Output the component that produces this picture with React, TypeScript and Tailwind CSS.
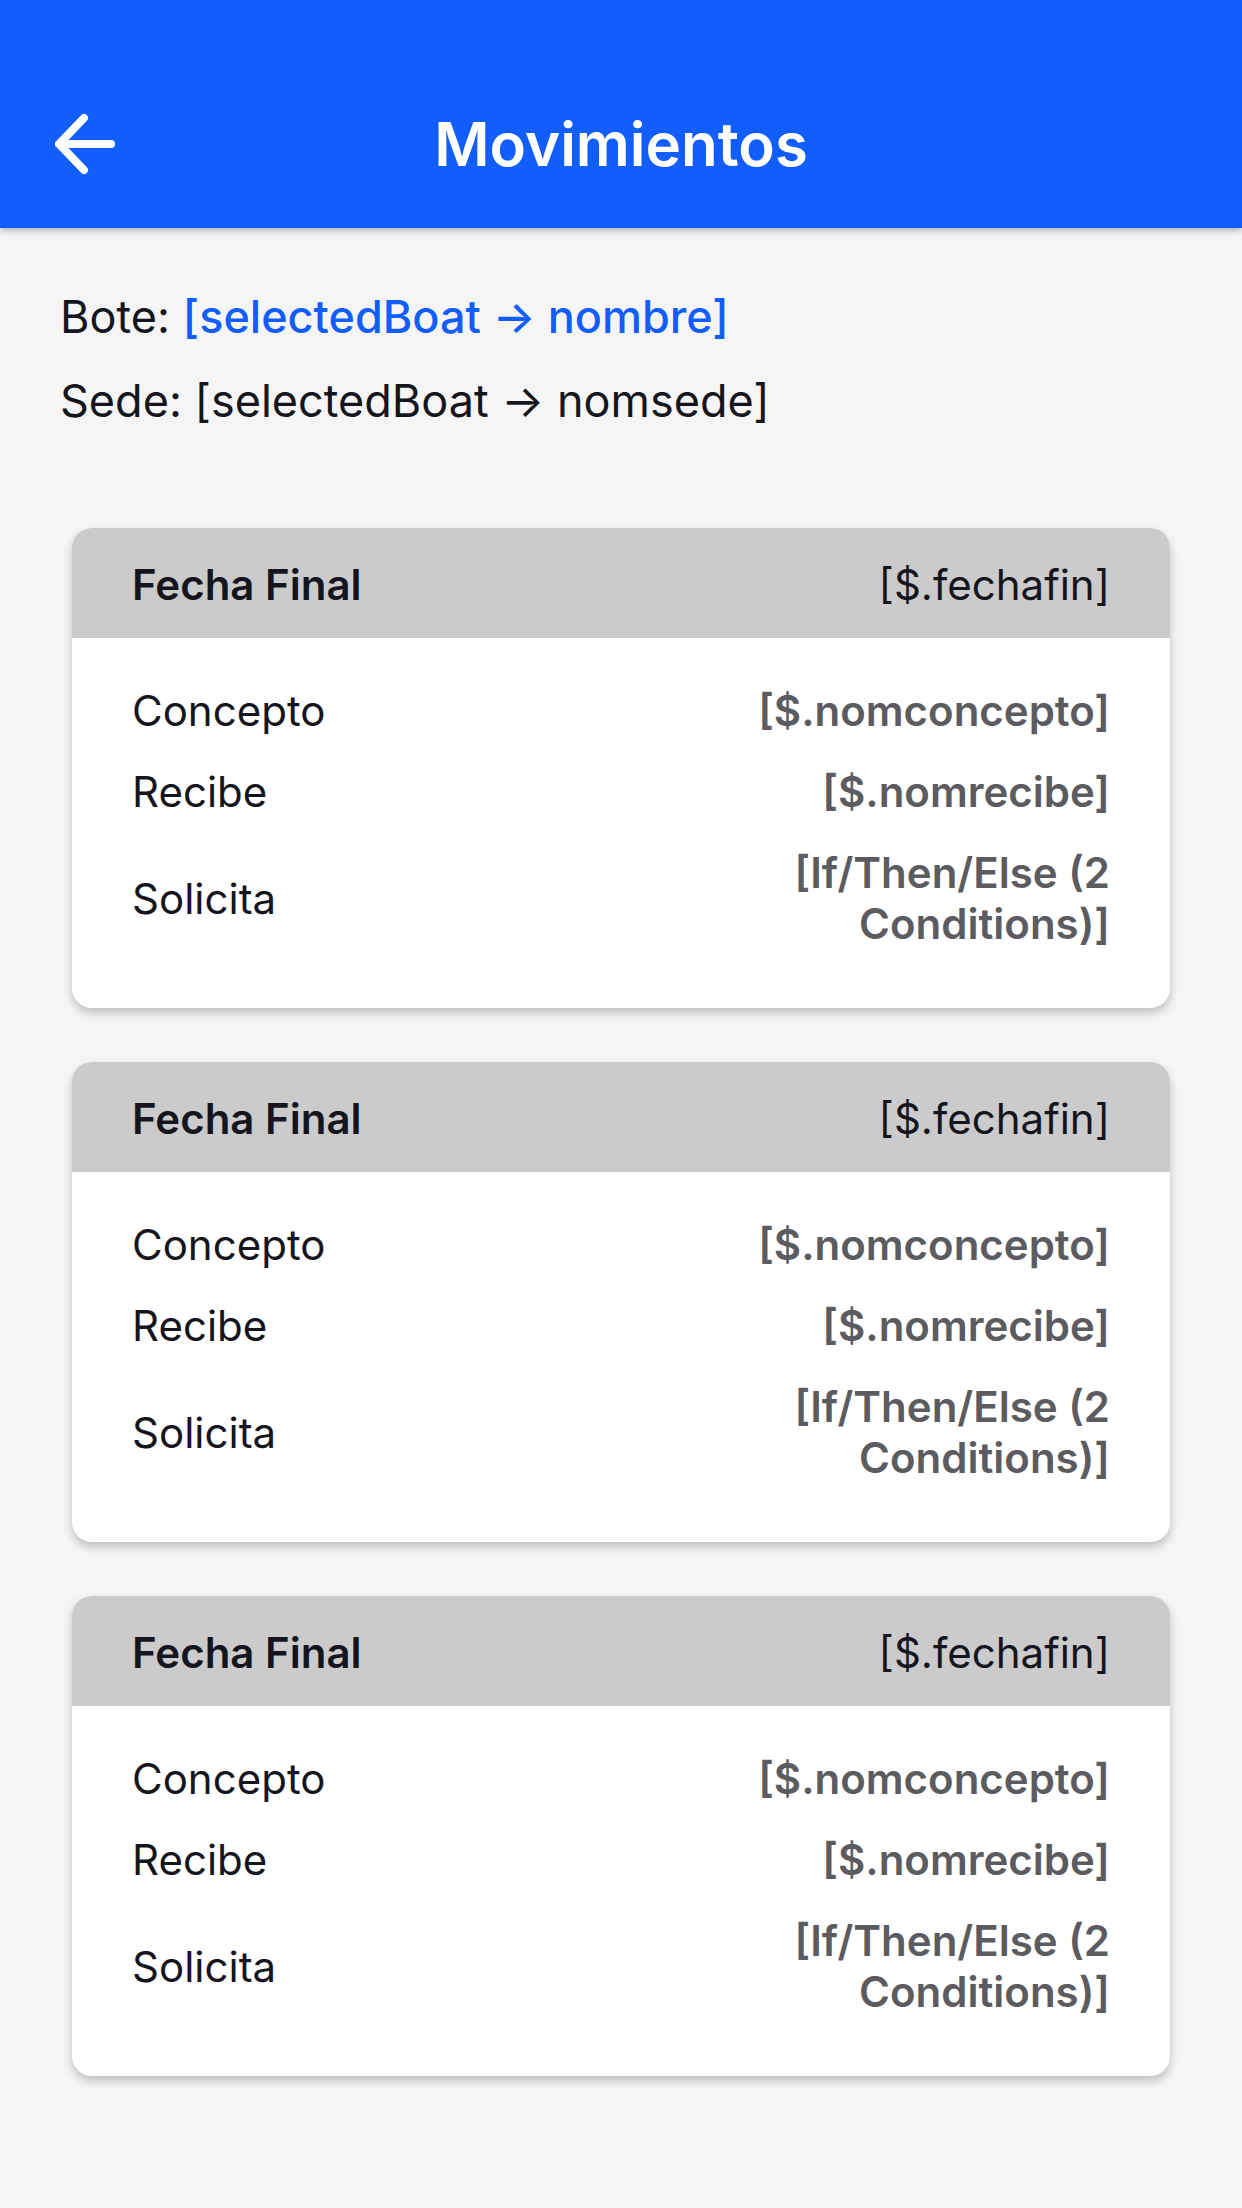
import React from "react";

const rows = [
  { label: "Concepto", value: "[$.nomconcepto]" },
  { label: "Recibe", value: "[$.nomrecibe]" },
  { label: "Solicita", value: "[If/Then/Else (2 Conditions)]" },
];

function MovementCard() {
  return (
    <div className="rounded-[20px] bg-white overflow-hidden shadow-[0_5px_10px_rgba(0,0,0,0.22)]">
      <div className="h-[110px] pt-[2px] bg-[#cbcbcb] px-[60px] flex items-center justify-between">
        <span className="text-[42px] font-semibold text-[#15151d]">Fecha Final</span>
        <span className="text-[42px] text-[#15151d]">[$.fechafin]</span>
      </div>
      <div className="px-[60px] pt-[47px] pb-[59px] flex flex-col gap-[30px]">
        {rows.map((row) => (
          <div key={row.label} className="flex items-center justify-between leading-[51px]">
            <span className="text-[42px] text-[#15151d]">{row.label}</span>
            <span className="text-[42px] font-semibold text-[#5b5b60] text-right max-w-[400px]">
              {row.value}
            </span>
          </div>
        ))}
      </div>
    </div>
  );
}

export default function App() {
  return (
    <div
      className="min-h-[2208px] w-[1242px] bg-[#f5f5f5]"
      style={{ fontFamily: "Inter, 'Noto Sans', sans-serif" }}
    >
      <header className="relative h-[228px] bg-[#115efc] flex items-center justify-center shadow-[0_3px_6px_rgba(0,0,0,0.25)]">
        <button className="absolute left-[50px] top-[110px] w-[68px] h-[68px] flex items-center justify-center">
          <svg viewBox="0 0 68 68" className="w-[68px] h-[68px]" fill="none">
            <path
              d="M9 34H61M34 8L9 34L34 60"
              stroke="white"
              strokeWidth="8"
              strokeLinecap="round"
              strokeLinejoin="round"
            />
          </svg>
        </button>
        <h1 className="pt-[60px] text-[60px] font-semibold text-white">Movimientos</h1>
      </header>

      <div className="px-[60px] pt-[47px]">
        <p className="text-[45px] leading-[84px] text-[#15151d]">
          Bote: <span className="text-[#115efc] font-medium">[selectedBoat → nombre]</span>
        </p>
        <p className="text-[45px] leading-[84px] text-[#15151d]">
          Sede: [selectedBoat → nomsede]
        </p>
      </div>

      <div className="px-[72px] mt-[85px] pb-[80px] flex flex-col gap-[54px]">
        <MovementCard />
        <MovementCard />
        <MovementCard />
      </div>
    </div>
  );
}
